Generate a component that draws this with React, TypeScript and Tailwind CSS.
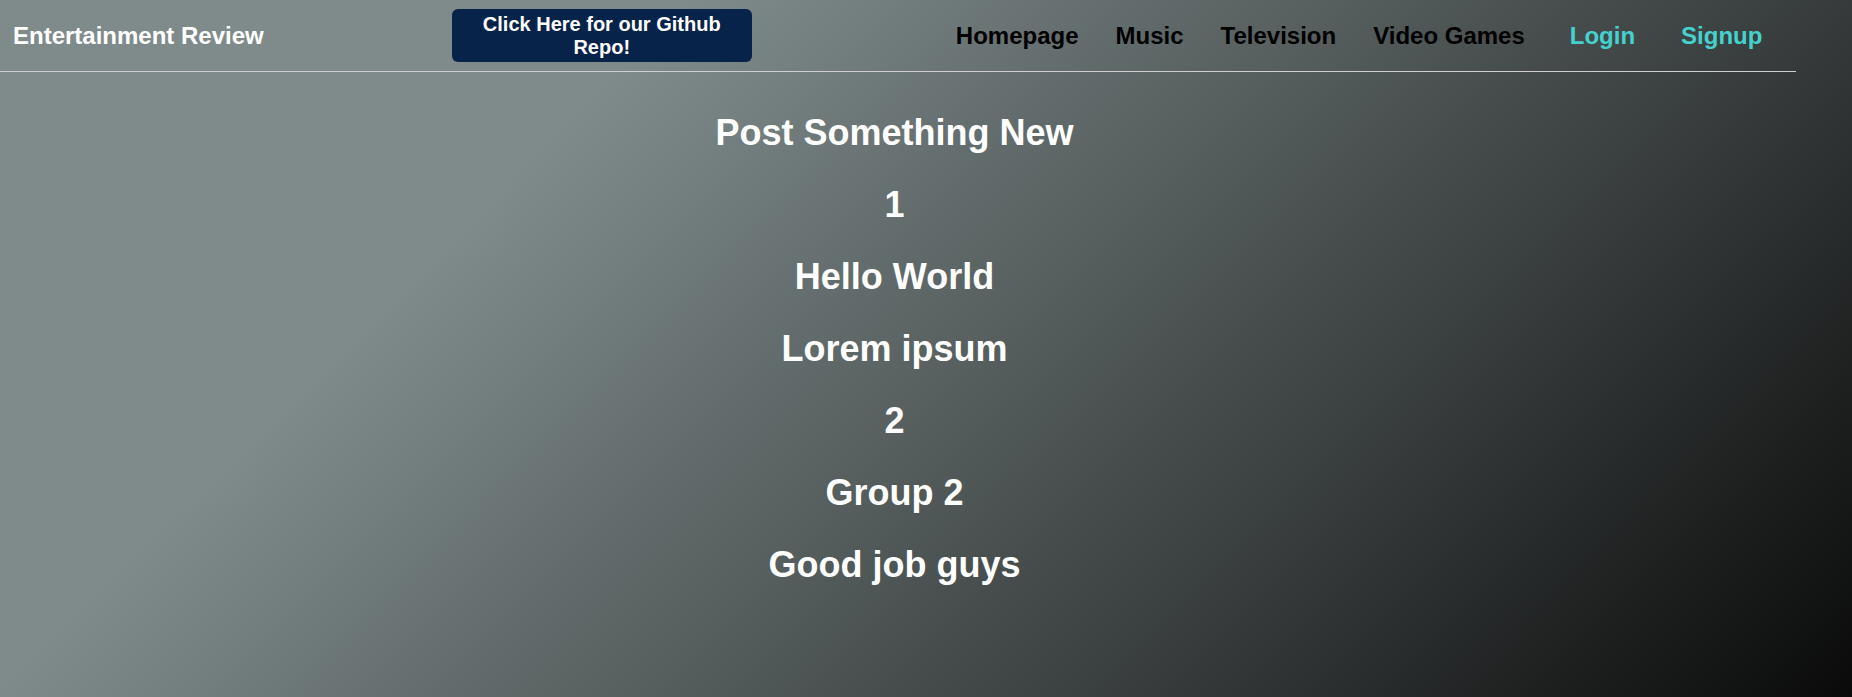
const navLinks = ['Homepage', 'Music', 'Television', 'Video Games']
const authLinks = ['Login', 'Signup']

const posts = [
  { id: 1, title: 'Hello World', body: 'Lorem ipsum' },
  { id: 2, title: 'Group 2', body: 'Good job guys' },
]

function Header() {
  return (
    <header className="w-[97%] h-[72px] flex items-center border-b border-[#cfcfcf] pl-[13px] pr-[34px]">
      <a href="#" className="text-[24px] font-bold text-white leading-[28px]">
        Entertainment Review
      </a>
      <a
        href="#"
        className="ml-[188px] w-[300px] h-[53px] flex items-center justify-center rounded-[6px] bg-[#082349] text-white text-[20px] font-bold leading-[23px] text-center px-2"
      >
        Click Here for our Github Repo!
      </a>
      <nav className="ml-auto flex items-center">
        <div className="flex items-center gap-[37px]">
          {navLinks.map(link => (
            <a key={link} href="#" className="text-[24px] font-bold text-black leading-[28px]">
              {link}
            </a>
          ))}
        </div>
        <div className="flex items-center gap-[46px] ml-[45px]">
          {authLinks.map(link => (
            <a key={link} href="#" className="text-[24px] font-bold text-[#45d2cf] leading-[28px]">
              {link}
            </a>
          ))}
        </div>
      </nav>
    </header>
  )
}

export default function App() {
  return (
    <div
      className="min-h-[697px] bg-[linear-gradient(135deg,#7f8b8b_27%,#0a0a0a)]"
      style={{ fontFamily: '"Liberation Sans", Arial, sans-serif' }}
    >
      <Header />
      <main className="w-[1789px] flex flex-col items-center pt-[25px] text-white text-[36px] font-bold leading-[72px]">
        <h1>Post Something New</h1>
        {posts.map(post => (
          <div key={post.id} className="flex flex-col items-center">
            <h2>{post.id}</h2>
            <h2>{post.title}</h2>
            <p>{post.body}</p>
          </div>
        ))}
      </main>
    </div>
  )
}
